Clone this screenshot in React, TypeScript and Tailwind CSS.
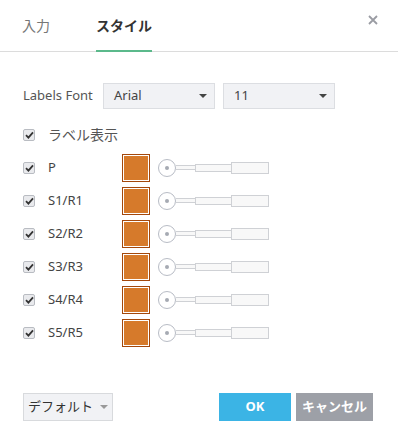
import React from 'react';

const ROWS = ['P', 'S1/R1', 'S2/R2', 'S3/R3', 'S4/R4', 'S5/R5'];

function Check() {
  return (
    <span className="flex h-[12px] w-[12px] items-center justify-center rounded-[2px] border border-[#b9bcc2] bg-[#e9eaed]">
      <svg width="9" height="8" viewBox="0 0 9 8">
        <path d="M1 4.2 L3.4 6.6 L8 1.4" fill="none" stroke="#333" strokeWidth="1.8" />
      </svg>
    </span>
  );
}

function Caret({ color = '#444' }: { color?: string }) {
  return (
    <svg width="8" height="4" viewBox="0 0 8 4">
      <path d="M0 0 L8 0 L4 4 Z" fill={color} />
    </svg>
  );
}

function Select({ value, width }: { value: string; width: string }) {
  return (
    <div className={`flex h-[26px] ${width} items-center justify-between border border-[#dcdee2] bg-[#f1f2f5] pl-[10px] pr-[7px] text-[#444]`}>
      <span>{value}</span>
      <Caret />
    </div>
  );
}

function Slider() {
  return (
    <div className="flex items-center">
      <div className="flex h-[18px] w-[18px] items-center justify-center rounded-full border border-[#b8bcc5] bg-white">
        <span className="h-[4px] w-[4px] rounded-full bg-[#a6aab3]" />
      </div>
      <div className="h-[5px] w-[19px] border-y border-[#cfd1d5] bg-[#f8f8f8]" />
      <div className="h-[8px] w-[37px] border border-[#cfd1d5] bg-[#f8f8f8]" />
      <div className="-ml-px h-[12px] w-[38px] border border-[#cfd1d5] bg-[#f8f8f8]" />
    </div>
  );
}

function Row({ label }: { label: string }) {
  return (
    <div className="flex h-[33px] items-center">
      <Check />
      <span className="ml-[13px] w-[62px] text-[#444]">{label}</span>
      <div className="ml-[12px] h-[28px] w-[28px] border border-[#a4480c] bg-[#d67a2b] shadow-[inset_0_0_0_1px_#fff]" />
      <div className="ml-[8px]">
        <Slider />
      </div>
    </div>
  );
}

export default function App() {
  return (
    <div
      className="h-[445px] w-[398px] bg-white text-[13px]"
      style={{ fontFamily: '"Noto Sans", "Noto Sans CJK JP", sans-serif' }}
    >
      {/* header tabs */}
      <div className="flex h-[52px] items-stretch border-b border-[#dcdcdc] pl-[22px] pr-[20px]">
        <div className="flex items-center text-[14px] text-[#777]">入力</div>
        <div className="ml-[46px] -mb-px flex items-center border-b-2 border-[#5bb98b] px-0 text-[14px] font-bold text-[#333]">
          スタイル
        </div>
        <div className="ml-auto flex items-start pt-[15px]">
          <svg width="10" height="10" viewBox="0 0 10 10">
            <path d="M1 1 L9 9 M9 1 L1 9" stroke="#9a9ca3" strokeWidth="1.8" />
          </svg>
        </div>
      </div>

      <div className="pl-[23px] pt-[31px]">
        <div className="flex h-[26px] items-center">
          <span className="w-[80px] text-[#555]">Labels Font</span>
          <Select value="Arial" width="w-[112px]" />
          <div className="ml-[8px]">
            <Select value="11" width="w-[112px]" />
          </div>
        </div>

        <div className="mt-[9px]">
          <div className="flex h-[33px] items-center">
            <Check />
            <span className="ml-[13px] text-[14px] text-[#555]">ラベル表示</span>
          </div>
          {ROWS.map((r) => (
            <Row key={r} label={r} />
          ))}
        </div>
      </div>

      {/* footer */}
      <div className="mt-[44px] flex items-center pl-[23px] pr-[25px]">
        <button className="flex h-[28px] w-[90px] items-center justify-center gap-[7px] border border-[#d8dadd] bg-[#f1f2f5] text-[#333]">
          デフォルト
          <Caret color="#999" />
        </button>
        <button className="ml-auto h-[28px] w-[72px] bg-[#3bb4e5] font-bold text-white">OK</button>
        <button className="ml-[5px] h-[28px] w-[77px] bg-[#9da0a7] font-bold text-white">キャンセル</button>
      </div>
    </div>
  );
}
